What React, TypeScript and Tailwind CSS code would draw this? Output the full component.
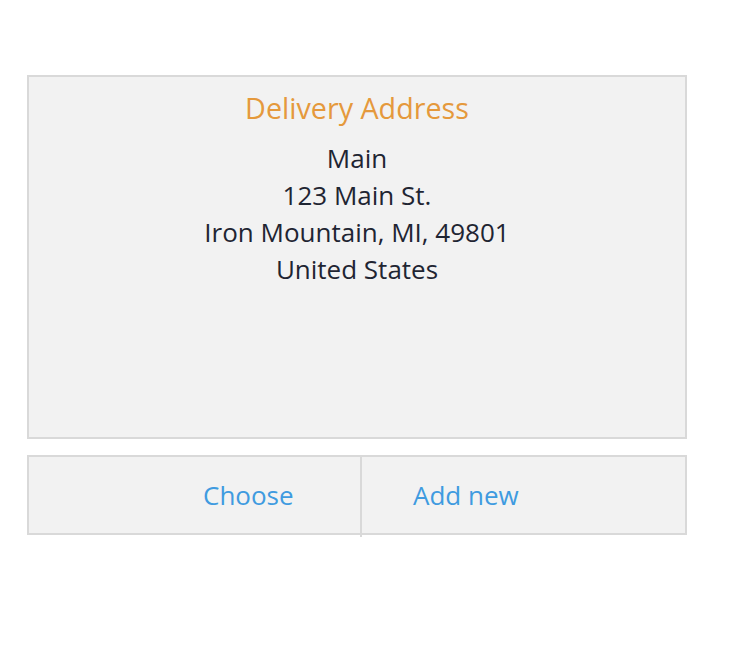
import React from "react";

export default function App() {
  return (
    <div className="min-h-[654px] w-[746px] bg-white pt-[75px] pl-[27px]" style={{ fontFamily: '"Open Sans", sans-serif' }}>
      <div className="w-[660px] h-[364px] border-2 border-[#d9d9d9] bg-[#f2f2f2] flex flex-col items-center pt-[11px]">
        <div className="text-[28.7px] leading-[40px] text-[#e5993c]">Delivery Address</div>
        <div className="mt-[12px] text-[26px] leading-[37px] text-[#1f2532] text-center">
          <div>Main</div>
          <div>123 Main St.</div>
          <div>Iron Mountain, MI, 49801</div>
          <div>United States</div>
        </div>
      </div>
      <div className="mt-[16px] w-[660px] h-[80px] border-2 border-[#d9d9d9] bg-[#f2f2f2] flex">
        <div className="w-[333px] h-[80px] shrink-0 border-r-2 border-[#d9d9d9] pl-[174px] pt-[20px] text-[26px] leading-[36px] text-[#3f9be0]">
          Choose
        </div>
        <div className="pl-[51px] pt-[20px] text-[26px] leading-[36px] text-[#3f9be0]">Add new</div>
      </div>
    </div>
  );
}
